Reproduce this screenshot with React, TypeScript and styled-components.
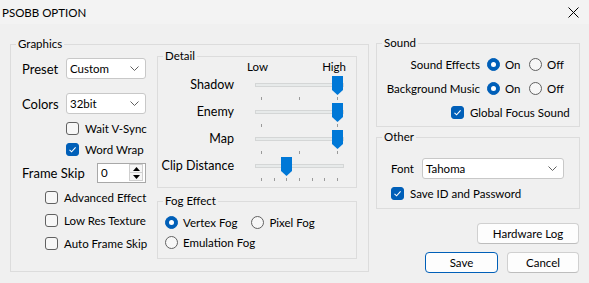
import styled, { createGlobalStyle } from 'styled-components';

const GlobalStyle = createGlobalStyle`
  html, body {
    margin: 0;
    padding: 0;
    background: #f0f0f0;
  }
  body {
    font-family: Lato, 'Liberation Sans', sans-serif;
    font-size: 11.5px;
    color: #000;
    white-space: nowrap;
  }
  * {
    box-sizing: border-box;
  }
`;

interface ISlider {
  label: string;
  value: number;
  max: number;
}

const sliders: ISlider[] = [
  { label: 'Shadow', value: 2, max: 2 },
  { label: 'Enemy', value: 1, max: 1 },
  { label: 'Map', value: 2, max: 2 },
  { label: 'Clip Distance', value: 2, max: 6 },
];

function CheckBox({ on }: { on?: boolean }) {
  return (
    <Box $on={on}>
      {on && (
        <svg width="11" height="11" viewBox="0 0 11 11">
          <polyline
            points="2.5,5.8 4.6,7.8 8.6,3.4"
            fill="none"
            stroke="#fff"
            strokeWidth="1.1"
          />
        </svg>
      )}
    </Box>
  );
}

function RadioDot({ on }: { on?: boolean }) {
  return <Radio $on={on}>{on && <Dot />}</Radio>;
}

function Chevron() {
  return (
    <svg width="9" height="5" viewBox="0 0 9 5">
      <polyline points="0.5,0.5 4.5,4.5 8.5,0.5" fill="none" stroke="#606060" />
    </svg>
  );
}

function Slider({ value, max }: { value: number; max: number }) {
  const left = 1 + Math.round((value / max) * 76);
  return (
    <SliderBox>
      <Track />
      <Ticks>
        {Array.from({ length: max + 1 }).map((_, i) => (
          <Tick key={i} />
        ))}
      </Ticks>
      <Thumb style={{ left }} width="11" height="19" viewBox="0 0 11 19">
        <path d="M0 0 H11 V14 L5.5 19 L0 14 Z" fill="#0078d7" />
      </Thumb>
    </SliderBox>
  );
}

export default function App() {
  return (
    <Window>
      <GlobalStyle />
      <TitleBar>
        <span>PSOBB OPTION</span>
        <svg width="11" height="11" viewBox="0 0 11 11">
          <path d="M0.5 0.5 L10.5 10.5 M10.5 0.5 L0.5 10.5" stroke="#000" />
        </svg>
      </TitleBar>
      <Body>
        <Group $w={359} $h={228} $mt={1}>
          <Caption>Graphics</Caption>
          <GraphicsInner>
            <LeftCol>
              <FieldRow $mt={1}>
                <FieldLabel $w={44}>Preset</FieldLabel>
                <Select $w={80}>
                  <span>Custom</span>
                  <Chevron />
                </Select>
              </FieldRow>
              <FieldRow $mt={14}>
                <FieldLabel $w={44}>Colors</FieldLabel>
                <Select $w={80}>
                  <span>32bit</span>
                  <Chevron />
                </Select>
              </FieldRow>
              <CheckRow $indent={44} $mt={4}>
                <CheckBox />
                <span>Wait V-Sync</span>
              </CheckRow>
              <CheckRow $indent={44} $mt={1}>
                <CheckBox on />
                <span>Word Wrap</span>
              </CheckRow>
              <FieldRow $mt={3}>
                <FieldLabel $w={75}>Frame Skip</FieldLabel>
                <Spin>
                  <SpinValue>0</SpinValue>
                  <SpinButtons>
                    <SpinButton>
                      <svg width="7" height="4" viewBox="0 0 7 4">
                        <path d="M0 4 L3.5 0 L7 4 Z" fill="#000" />
                      </svg>
                    </SpinButton>
                    <SpinButton>
                      <svg width="7" height="4" viewBox="0 0 7 4">
                        <path d="M0 0 L3.5 4 L7 0 Z" fill="#000" />
                      </svg>
                    </SpinButton>
                  </SpinButtons>
                </Spin>
              </FieldRow>
              <CheckRow $indent={23} $mt={4}>
                <CheckBox />
                <span>Advanced Effect</span>
              </CheckRow>
              <CheckRow $indent={23} $mt={3}>
                <CheckBox />
                <span>Low Res Texture</span>
              </CheckRow>
              <CheckRow $indent={23} $mt={3}>
                <CheckBox />
                <span>Auto Frame Skip</span>
              </CheckRow>
            </LeftCol>
            <RightCol>
              <Group $w={200} $h={132}>
                <Caption>Detail</Caption>
                <DetailHeader>
                  <span>Low</span>
                  <span>High</span>
                </DetailHeader>
                {sliders.map((s) => (
                  <SliderRow key={s.label}>
                    <SliderLabel>{s.label}</SliderLabel>
                    <Slider value={s.value} max={s.max} />
                  </SliderRow>
                ))}
              </Group>
              <Group $w={200} $h={58} $mt={13}>
                <Caption>Fog Effect</Caption>
                <FogInner>
                  <OptionLine>
                    <RadioOption>
                      <RadioDot on />
                      <span>Vertex Fog</span>
                    </RadioOption>
                    <RadioOption>
                      <RadioDot />
                      <span>Pixel Fog</span>
                    </RadioOption>
                  </OptionLine>
                  <OptionLine>
                    <RadioOption>
                      <RadioDot />
                      <span>Emulation Fog</span>
                    </RadioOption>
                  </OptionLine>
                </FogInner>
              </Group>
            </RightCol>
          </GraphicsInner>
        </Group>
        <SideCol>
          <Group $w={204} $h={84}>
            <Caption>Sound</Caption>
            <SoundInner>
              <SoundRow>
                <SoundLabel>Sound Effects</SoundLabel>
                <RadioOption $w={42}>
                  <RadioDot on />
                  <span>On</span>
                </RadioOption>
                <RadioOption>
                  <RadioDot />
                  <span>Off</span>
                </RadioOption>
              </SoundRow>
              <SoundRow>
                <SoundLabel>Background Music</SoundLabel>
                <RadioOption $w={42}>
                  <RadioDot on />
                  <span>On</span>
                </RadioOption>
                <RadioOption>
                  <RadioDot />
                  <span>Off</span>
                </RadioOption>
              </SoundRow>
              <CheckRow $indent={74}>
                <CheckBox on />
                <span>Global Focus Sound</span>
              </CheckRow>
            </SoundInner>
          </Group>
          <Group $w={204} $h={72} $mt={10}>
            <Caption>Other</Caption>
            <OtherInner>
              <FieldRow>
                <FieldLabel $w={31} $small>
                  Font
                </FieldLabel>
                <Select $w={142}>
                  <span>Tahoma</span>
                  <Chevron />
                </Select>
              </FieldRow>
              <CheckRow $mt={4}>
                <CheckBox on />
                <span>Save ID and Password</span>
              </CheckRow>
            </OtherInner>
          </Group>
          <ButtonRow $mt={14}>
            <Button $w={102}>Hardware Log</Button>
          </ButtonRow>
          <ButtonRow $mt={8}>
            <Button $w={73} $primary>
              Save
            </Button>
            <Button $w={72}>Cancel</Button>
          </ButtonRow>
        </SideCol>
      </Body>
    </Window>
  );
}

const Window = styled.div`
  width: 589px;
  height: 283px;
  background: #f0f0f0;
  overflow: hidden;
`;

const TitleBar = styled.header`
  display: flex;
  justify-content: space-between;
  align-items: center;
  height: 24px;
  padding: 1px 10px 0 2px;
  background: #f3f3f3;
  font-size: 11.5px;
`;

const Body = styled.main`
  display: flex;
  align-items: flex-start;
  gap: 7px;
  padding: 19px 9px 0 10px;
`;

const Group = styled.section<{ $w: number; $h: number; $mt?: number }>`
  position: relative;
  flex: none;
  width: ${(p) => p.$w}px;
  height: ${(p) => p.$h}px;
  margin-top: ${(p) => p.$mt ?? 0}px;
  border: 1px solid #dcdcdc;
`;

const Caption = styled.span`
  position: absolute;
  top: -9px;
  left: 5px;
  padding: 0 2px;
  background: #f0f0f0;
  line-height: 16px;
`;

const GraphicsInner = styled.div`
  display: flex;
  gap: 11px;
  padding: 11px 11px 0 11px;
`;

const LeftCol = styled.div`
  display: flex;
  flex-direction: column;
  width: 124px;
  padding-top: 1px;
`;

const RightCol = styled.div`
  display: flex;
  flex-direction: column;
`;

const FieldRow = styled.div<{ $mt?: number }>`
  display: flex;
  align-items: center;
  height: 21px;
  margin-top: ${(p) => p.$mt ?? 0}px;
`;

const FieldLabel = styled.span<{ $w: number; $small?: boolean }>`
  width: ${(p) => p.$w}px;
  font-size: ${(p) => (p.$small ? 11.5 : 13)}px;
`;

const Select = styled.div<{ $w: number }>`
  display: flex;
  justify-content: space-between;
  align-items: center;
  width: ${(p) => p.$w}px;
  height: 21px;
  padding: 0 6px 0 3px;
  background: #fff;
  border: 1px solid #c8c8c8;
  border-radius: 3px;
`;

const CheckRow = styled.div<{ $indent?: number; $mt?: number }>`
  display: flex;
  align-items: center;
  gap: 6px;
  height: 20px;
  padding-left: ${(p) => p.$indent ?? 0}px;
  margin-top: ${(p) => p.$mt ?? 0}px;
`;

const Box = styled.span<{ $on?: boolean }>`
  display: flex;
  justify-content: center;
  align-items: center;
  flex: none;
  width: 13px;
  height: 13px;
  border-radius: 3px;
  border: 1px solid ${(p) => (p.$on ? '#005fb8' : '#616161')};
  background: ${(p) => (p.$on ? '#005fb8' : '#f7f7f7')};
`;

const Radio = styled.span<{ $on?: boolean }>`
  display: flex;
  justify-content: center;
  align-items: center;
  flex: none;
  width: 13px;
  height: 13px;
  border-radius: 50%;
  border: 1px solid ${(p) => (p.$on ? '#005fb8' : '#616161')};
  background: ${(p) => (p.$on ? '#005fb8' : '#f7f7f7')};
`;

const Dot = styled.span`
  width: 5px;
  height: 5px;
  border-radius: 50%;
  background: #fff;
`;

const Spin = styled.div`
  display: flex;
  align-items: center;
  width: 49px;
  height: 20px;
  background: #fff;
  border: 1px solid #a8a8a8;
`;

const SpinValue = styled.span`
  flex: 1;
  padding-left: 3px;
`;

const SpinButtons = styled.div`
  display: flex;
  flex-direction: column;
  width: 14px;
  height: 17px;
  margin-right: 2px;
  border: 1px solid #cfcfcf;
`;

const SpinButton = styled.span`
  display: flex;
  justify-content: center;
  align-items: center;
  flex: 1;
  background: #f6f6f6;
  & + & {
    border-top: 1px solid #cfcfcf;
  }
`;

const DetailHeader = styled.div`
  display: flex;
  justify-content: space-between;
  width: 99px;
  margin: 2px 0 1px 89px;
  line-height: 16px;
`;

const SliderRow = styled.div`
  display: flex;
  height: 27px;
`;

const SliderLabel = styled.span`
  width: 76px;
  font-size: 12.5px;
  line-height: 18px;
  text-align: right;
`;

const SliderBox = styled.div`
  position: relative;
  width: 89px;
  margin-left: 21px;
  padding-top: 7px;
`;

const Track = styled.div`
  height: 4px;
  background: #e7eaea;
  border: 1px solid #d4d6d6;
`;

const Ticks = styled.div`
  display: flex;
  justify-content: space-between;
  height: 3px;
  margin-top: 10px;
  padding: 0 6px;
`;

const Tick = styled.span`
  width: 1px;
  background: #9a9a9a;
`;

const Thumb = styled.svg`
  position: absolute;
  top: 0;
`;

const FogInner = styled.div`
  padding: 10px 0 0 7px;
`;

const OptionLine = styled.div`
  display: flex;
  gap: 14px;
`;

const RadioOption = styled.span<{ $w?: number }>`
  display: flex;
  align-items: center;
  gap: 5px;
  height: 20px;
  width: ${(p) => (p.$w ? `${p.$w}px` : 'auto')};
`;

const SideCol = styled.div`
  display: flex;
  flex-direction: column;
  width: 204px;
`;

const SoundInner = styled.div`
  display: flex;
  flex-direction: column;
  gap: 4px;
  padding-top: 10px;
`;

const SoundRow = styled.div`
  display: flex;
  align-items: center;
`;

const SoundLabel = styled.span`
  width: 103px;
  margin-right: 7px;
  text-align: right;
`;

const OtherInner = styled.div`
  padding: 20px 0 0 14px;
`;

const ButtonRow = styled.div<{ $mt: number }>`
  display: flex;
  justify-content: flex-end;
  gap: 9px;
  margin-top: ${(p) => p.$mt}px;
  padding-right: 1px;
`;

const Button = styled.button<{ $w: number; $primary?: boolean }>`
  width: ${(p) => p.$w}px;
  height: 21px;
  padding: 0;
  font: inherit;
  color: #000;
  background: #fdfdfd;
  border: 1px solid ${(p) => (p.$primary ? '#005fb8' : '#d0d0d0')};
  border-bottom-color: ${(p) => (p.$primary ? '#005fb8' : '#bdbdbd')};
  border-radius: 4px;
`;
